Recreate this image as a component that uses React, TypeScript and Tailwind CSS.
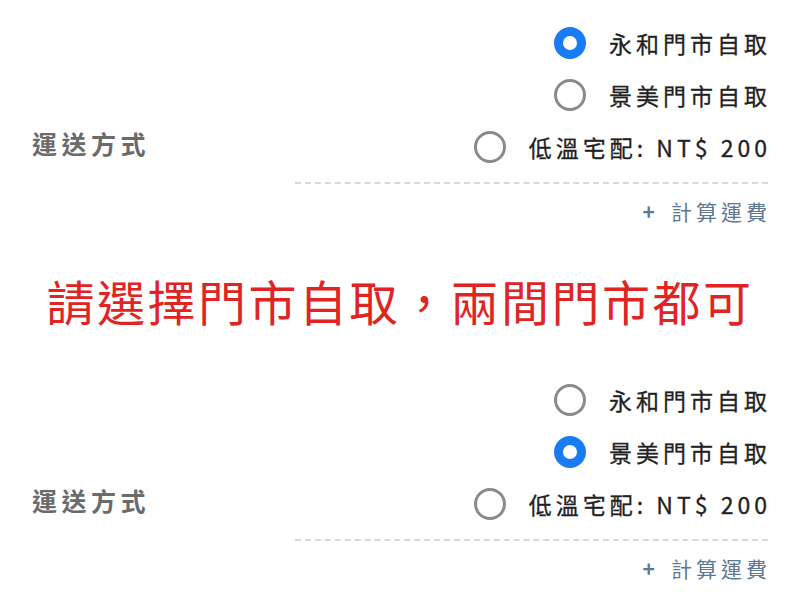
import React from "react";

type Option = { label: string; checked?: boolean };

const FONT = { fontFamily: '"Noto Sans CJK TC", "Noto Sans", sans-serif' };

const Radio = ({ checked }: { checked?: boolean }) =>
  checked ? (
    <span className="block w-[32px] h-[32px] rounded-full border-[9px] border-[#1a7cf4] bg-white shrink-0" />
  ) : (
    <span className="block w-[32px] h-[32px] rounded-full border-[3px] border-[#8a8a8a] bg-white shrink-0" />
  );

const ShippingBlock = ({ options }: { options: Option[] }) => (
  <div className="flex flex-col">
    <div className="flex items-end justify-between pl-[32px] pr-[33px]">
      <div className="h-[52px] flex items-center text-[25px] font-semibold tracking-[4.5px] text-[#6b6b6b] -translate-y-[3px]">
        運送方式
      </div>
      <div className="flex flex-col items-end">
        {options.map((o) => (
          <label key={o.label} className="h-[52px] flex items-center gap-[23px] text-[23px] tracking-[4px] text-[#222222] [-webkit-text-stroke:0.3px_#222222]">
            <Radio checked={o.checked} />
            <span className="-mr-[4px]">{o.label}</span>
          </label>
        ))}
      </div>
    </div>
    <div className="ml-[295px] mr-[32px] mt-[9px] border-t-2 border-dashed border-[#d6dade]" />
    <div className="h-[30px] mt-[13px] flex items-center justify-end pr-[33px] text-[21px] tracking-[4px] text-[#5d7895]">
      <span className="font-bold mr-[12px]">+</span>
      <span className="-mr-[4px]">計算運費</span>
    </div>
  </div>
);

export default function App() {
  return (
    <div className="w-[800px] h-[600px] bg-white overflow-hidden pt-[17px]" style={FONT}>
      <ShippingBlock
        options={[
          { label: "永和門市自取", checked: true },
          { label: "景美門市自取" },
          { label: "低溫宅配: NT$ 200" },
        ]}
      />
      <div className="mt-[43px] h-[60px] flex items-center justify-center text-[48px] tracking-[2.5px] text-[#e02424]">
        請選擇門市自取，兩間門市都可
      </div>
      <div className="mt-[44px]">
        <ShippingBlock
          options={[
            { label: "永和門市自取" },
            { label: "景美門市自取", checked: true },
            { label: "低溫宅配: NT$ 200" },
          ]}
        />
      </div>
    </div>
  );
}
